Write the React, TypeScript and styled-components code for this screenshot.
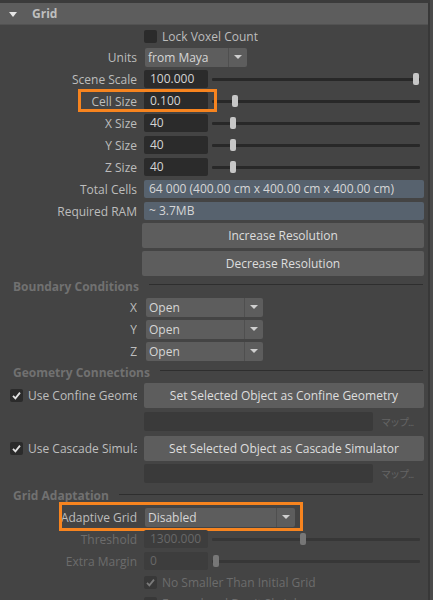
import React from 'react';
import styled, { createGlobalStyle } from 'styled-components';

const GlobalStyle = createGlobalStyle`
  html, body {
    margin: 0;
    padding: 0;
    background: #4a4a4a;
  }
  body {
    font-family: 'Open Sans', 'Liberation Sans', sans-serif;
    font-size: 12px;
  }
`;

const Page = styled.div`
  width: 433px;
  height: 600px;
  overflow: hidden;
  background: #4a4a4a;
  display: flex;
  flex-direction: column;
`;

const TopStrip = styled.div`
  flex: none;
  height: 3px;
  width: 430px;
  background: #3b3b3b;
`;

const Panel = styled.div`
  flex: 1 0 auto;
  width: 428px;
  background: #444444;
  border-right: 2px solid #383838;
`;

const Header = styled.div`
  height: 21px;
  display: flex;
  align-items: center;
  gap: 15px;
  padding-left: 9px;
  background: #5d5d5d;
  border-bottom: 1px solid #525252;
  color: #bfbfbf;
  font-weight: bold;
`;

const Caret = styled.span`
  width: 0;
  height: 0;
  border-left: 4.5px solid transparent;
  border-right: 4.5px solid transparent;
  border-top: 5px solid #e6e6e6;
  margin-top: 1px;
`;

const Row = styled.div<{ $h?: number }>`
  position: relative;
  display: grid;
  grid-template-columns: 137px 1fr;
  column-gap: 7px;
  align-items: center;
  height: ${(p) => p.$h ?? 22}px;
  padding-right: 4px;
`;

const Label = styled.span<{ $dim?: boolean }>`
  text-align: right;
  white-space: nowrap;
  overflow: hidden;
  color: ${(p) => (p.$dim ? '#6c6c6c' : '#bdbdbd')};
`;

const Controls = styled.div`
  display: flex;
  align-items: center;
  gap: 4px;
`;

const NumberField = styled.div<{ $dim?: boolean }>`
  width: 58px;
  height: 18px;
  line-height: 18px;
  padding-left: 6px;
  border-radius: 2px;
  background: ${(p) => (p.$dim ? '#3d3d3d' : '#2b2b2b')};
  color: ${(p) => (p.$dim ? '#686868' : '#d4d4d4')};
`;

const Slider = styled.div<{ $dim?: boolean }>`
  position: relative;
  flex: 1;
  height: 14px;
  margin-right: 4px;

  &::before {
    content: '';
    position: absolute;
    left: 0;
    right: 0;
    top: 6px;
    height: 3px;
    border-radius: 1px;
    background: ${(p) => (p.$dim ? '#373737' : '#282828')};
  }
`;

const Handle = styled.span<{ $dim?: boolean }>`
  position: absolute;
  top: 1px;
  width: 6px;
  height: 12px;
  border-radius: 2px;
  background: ${(p) => (p.$dim ? '#777777' : '#c6c6c6')};
`;

const InfoField = styled.div`
  height: 18px;
  line-height: 18px;
  padding-left: 5px;
  border-radius: 2px;
  background: #57626e;
  color: #d6d6d6;
  white-space: nowrap;
  overflow: hidden;
`;

const Select = styled.div<{ $w: number; $x?: number }>`
  width: ${(p) => p.$w}px;
  margin-left: ${(p) => p.$x ?? 0}px;
  height: 19px;
  display: flex;
  border-radius: 2px;
  background: #5d5d5d;
  color: #d6d6d6;
`;

const SelectValue = styled.span`
  flex: 1;
  line-height: 19px;
  padding-left: 3px;
`;

const SelectArrow = styled.span`
  width: 18px;
  display: flex;
  align-items: center;
  justify-content: center;
  border-left: 1px solid #4f4f4f;

  &::after {
    content: '';
    border-left: 4px solid transparent;
    border-right: 4px solid transparent;
    border-top: 4px solid #cfcfcf;
  }
`;

const Button = styled.div`
  height: 25px;
  line-height: 25px;
  text-align: center;
  border-radius: 2px;
  background: #5d5d5d;
  color: #dedede;
`;

const ButtonStack = styled.div`
  display: flex;
  flex-direction: column;
  gap: 3px;
  padding: 1px 4px 0 142px;
`;

const Section = styled.div<{ $h?: number }>`
  height: ${(p) => p.$h ?? 20}px;
  display: flex;
  align-items: center;
  gap: 10px;
  padding: 0 5px 0 13px;
  color: #717171;
  font-weight: bold;
`;

const Rule = styled.span`
  flex: 1;
  height: 1px;
  margin-bottom: 3px;
  background: #2e2e2e;
`;

const Box = styled.span<{ $dim?: boolean }>`
  flex: none;
  width: 13px;
  height: 13px;
  border-radius: 2px;
  display: flex;
  align-items: center;
  justify-content: center;
  background: ${(p) => (p.$dim ? '#383838' : '#2b2b2b')};
  color: ${(p) => (p.$dim ? '#7a7a7a' : '#e2e2e2')};
`;

const CheckText = styled.span<{ $dim?: boolean }>`
  white-space: nowrap;
  overflow: hidden;
  color: ${(p) => (p.$dim ? '#6c6c6c' : '#bdbdbd')};
`;

const CheckLine = styled.div<{ $pad?: number; $top?: number }>`
  display: flex;
  align-items: center;
  gap: 5px;
  min-width: 0;
  padding-left: ${(p) => p.$pad ?? 0}px;
  margin-top: ${(p) => p.$top ?? 0}px;
`;

const MapField = styled.div`
  width: 229px;
  height: 19px;
  border-radius: 2px;
  background: #3a3a3a;
`;

const MapLink = styled.span`
  margin-left: 4px;
  font-family: 'Noto Sans CJK JP', 'Open Sans', sans-serif;
  font-size: 10px;
  letter-spacing: -1px;
  color: #646464;
`;

const Highlight = styled.span<{ $x: number; $y: number; $w: number; $h: number }>`
  position: absolute;
  left: ${(p) => p.$x}px;
  top: ${(p) => p.$y}px;
  width: ${(p) => p.$w}px;
  height: ${(p) => p.$h}px;
  box-sizing: border-box;
  border: 3px solid #f7841f;
  pointer-events: none;
`;

const TRACK = 208;

function Check({ on, dim }: { on: boolean; dim?: boolean }) {
  return (
    <Box $dim={dim}>
      {on && (
        <svg width='11' height='11' viewBox='0 0 11 11'>
          <path d='M2 5.8 L4.4 8.3 L9 2.6' fill='none' stroke='currentColor' strokeWidth='1.8' />
        </svg>
      )}
    </Box>
  );
}

function NumberRow(props: {
  label: string;
  value: string;
  pos: number;
  dim?: boolean;
  children?: React.ReactNode;
}) {
  return (
    <Row>
      <Label $dim={props.dim}>{props.label}</Label>
      <Controls>
        <NumberField $dim={props.dim}>{props.value}</NumberField>
        <Slider $dim={props.dim}>
          <Handle $dim={props.dim} style={{ left: Math.round(props.pos * (TRACK - 7)) }} />
        </Slider>
      </Controls>
      {props.children}
    </Row>
  );
}

function SelectRow(props: { label: string; value: string; width: number; x?: number; children?: React.ReactNode }) {
  return (
    <Row>
      <Label>{props.label}</Label>
      <Select $w={props.width} $x={props.x}>
        <SelectValue>{props.value}</SelectValue>
        <SelectArrow />
      </Select>
      {props.children}
    </Row>
  );
}

function MapRow({ h }: { h: number }) {
  return (
    <Row $h={h}>
      <span />
      <Controls>
        <MapField />
        <MapLink>マップ...</MapLink>
      </Controls>
    </Row>
  );
}

export default function App() {
  return (
    <Page>
      <GlobalStyle />
      <TopStrip />
      <Panel>
        <Header>
          <Caret />
          Grid
        </Header>

        <Row $h={21}>
          <span />
          <CheckLine $top={2}>
            <Check on={false} />
            <CheckText>Lock Voxel Count</CheckText>
          </CheckLine>
        </Row>
        <SelectRow label='Units' value='from Maya' width={102} x={1} />
        <NumberRow label='Scene Scale' value='100.000' pos={1} />
        <NumberRow label='Cell Size' value='0.100' pos={0.1}>
          <Highlight $x={78} $y={-1} $w={139} $h={23} />
        </NumberRow>
        <NumberRow label='X Size' value='40' pos={0.09} />
        <NumberRow label='Y Size' value='40' pos={0.09} />
        <NumberRow label='Z Size' value='40' pos={0.09} />
        <Row>
          <Label>Total Cells</Label>
          <InfoField>64 000 (400.00 cm x 400.00 cm x 400.00 cm)</InfoField>
        </Row>
        <Row>
          <Label>Required RAM</Label>
          <InfoField>~ 3.7MB</InfoField>
        </Row>
        <ButtonStack>
          <Button>Increase Resolution</Button>
          <Button>Decrease Resolution</Button>
        </ButtonStack>

        <Section>
          Boundary Conditions
          <Rule />
        </Section>
        <SelectRow label='X' value='Open' width={117} x={2} />
        <SelectRow label='Y' value='Open' width={117} x={2} />
        <SelectRow label='Z' value='Open' width={117} x={2} />

        <Section>
          Geometry Connections
          <Rule />
        </Section>
        <Row $h={27}>
          <CheckLine $pad={10}>
            <Check on />
            <CheckText>Use Confine Geometry</CheckText>
          </CheckLine>
          <Button>Set Selected Object as Confine Geometry</Button>
        </Row>
        <MapRow h={25} />
        <Row $h={28}>
          <CheckLine $pad={10}>
            <Check on />
            <CheckText>Use Cascade Simulator</CheckText>
          </CheckLine>
          <Button>Set Selected Object as Cascade Simulator</Button>
        </Row>
        <MapRow h={23} />

        <Section $h={21}>
          Grid Adaptation
          <Rule />
        </Section>
        <SelectRow label='Adaptive Grid' value='Disabled' width={150} x={1}>
          <Highlight $x={59} $y={-4} $w={244} $h={29} />
        </SelectRow>
        <NumberRow label='Threshold' value='1300.000' pos={0.438} dim />
        <NumberRow label='Extra Margin' value='0' pos={0.005} dim />
        <Row $h={20}>
          <span />
          <CheckLine>
            <Check on dim />
            <CheckText $dim>No Smaller Than Initial Grid</CheckText>
          </CheckLine>
        </Row>
        <Row $h={22}>
          <span />
          <CheckLine>
            <Check on={false} dim />
            <CheckText $dim>Expand and Don't Shrink</CheckText>
          </CheckLine>
        </Row>
      </Panel>
    </Page>
  );
}
